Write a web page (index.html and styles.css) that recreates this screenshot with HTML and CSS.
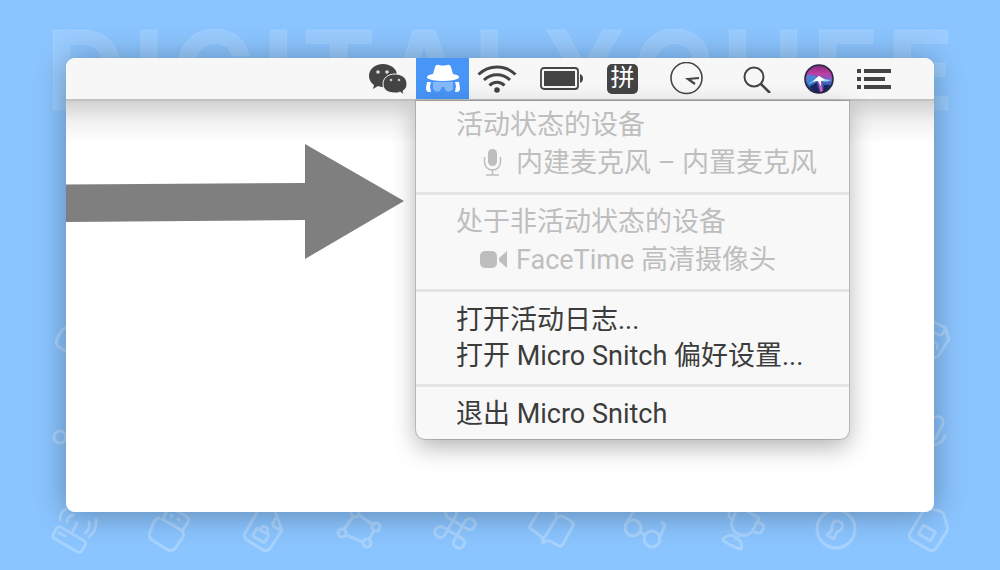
FILE: index.html
```html
<!DOCTYPE html>
<html lang="zh-CN">
<head>
    <meta charset="UTF-8">
    <meta name="viewport" content="width=device-width, initial-scale=1.0">
    <title>Micro Snitch</title>
    <link rel="stylesheet" href="styles.css">
</head>
<body>
    <div class="backdrop" aria-hidden="true">
        <div class="wordmark">
            <span>D</span><span>I</span><span>G</span><span>I</span><span>T</span><span>A</span><span>L</span><span>Y</span><span>C</span><span>H</span><span>E</span><span>E</span>
        </div>
        <div class="doodles">
            <div class="doodle-row">
                <svg viewBox="0 0 48 48"><path d="M18 9Q13 10 10 15L7 21Q5 26 9 29L20 36"/></svg>
                <svg viewBox="0 0 48 48"><path d="M28 4L38 9Q41 11 41 15L43 21L33 37Q30 41 26 39M26 13L33 17Q38 17 39 11M27 24Q33 25 31 31"/></svg>
            </div>
            <div class="doodle-row">
                <svg viewBox="0 0 48 48"><circle cx="10" cy="24" r="6"/></svg>
                <svg viewBox="0 0 48 48"><path d="M26 5Q38 1 37 11L29 26M39 23Q36 31 28 32"/></svg>
            </div>
            <div class="doodle-row">
                <svg viewBox="0 0 48 48"><rect x="-16" y="-6" width="33" height="13" rx="3" transform="translate(19 31) rotate(30)"/><path d="M9 25L15 28M27 15L23 23M39 14Q41 21 35 25M46 11Q47 23 39 29M23 7Q17 8 17 14M16 1Q10 4 10 12"/></svg>
                <svg viewBox="0 0 48 48"><path d="M14 10Q11 10 9 14L5 24Q3 29 7 32L23 42Q28 44 31 39L38 29Q40 25 36 22L17 11M19 9L22 3M30 2L41 8Q45 10 43 14L38 22M26 7L27 8M33 11L34 12"/></svg>
                <svg viewBox="0 0 48 48"><path d="M18 3L5 25Q3 29 7 32L23 42Q28 44 31 39L42 22L35 3M37 8L33 15Q32 18 36 20L42 22"/><rect x="-7" y="-4" width="14" height="9" rx="2" transform="translate(21 27) rotate(30)"/><path d="M20 22Q22 17 26 19Q29 21 27 25"/></svg>
                <svg viewBox="0 0 48 48"><circle cx="7" cy="25" r="4"/><circle cx="32" cy="35" r="4"/><circle cx="41" cy="19" r="4"/><circle cx="20" cy="5" r="4"/><path d="M9 21L18 9M11 27L28 34M34 31L39 23M24 7L37 16"/></svg>
                <svg viewBox="0 0 48 48"><g transform="translate(25 20) rotate(30) scale(1.8) translate(-12 -12)"><path class="thin" d="M18 3a3 3 0 0 0-3 3v12a3 3 0 1 0 3-3H6a3 3 0 1 0 3 3V6a3 3 0 1 0-3 3h12a3 3 0 1 0 0-6z"/></g></svg>
                <svg viewBox="0 0 48 48"><path d="M13 3L4 18Q3 20 5 21L16 29L17 35Q22 31 26 34L33 38Q35 39 37 36L47 18Q48 15 45 13L38 9Q33 7 30 11L17 32M30 11Q32 4 26 1"/></svg>
                <svg viewBox="0 0 48 48"><circle cx="12" cy="20" r="8"/><circle cx="31" cy="31" r="8"/><path d="M19 24L24 27M6 14L12 4Q14 1 20 3M38 31L43 20Q45 16 41 15"/></svg>
                <svg viewBox="0 0 48 48"><path d="M20 3L16 13Q14 22 22 26Q32 30 37 22L43 10L27 1M41 14L46 16Q49 17 47 21L45 24Q43 27 37 23M14 2Q11 9 16 11M23 27L20 31M8 30Q16 24 22 31Q27 35 25 41Q18 40 8 33Q6 32 8 30"/></svg>
                <svg viewBox="0 0 48 48"><circle cx="25" cy="21" r="19"/><path d="M21 19Q21 12 28 13Q34 16 30 22L26 24L23 31L16 27L21 22Z"/></svg>
                <svg viewBox="0 0 48 48"><path d="M18 2L4 25Q2 29 6 32L23 42Q28 44 31 39L41 23Q42 20 41 17L38 7Q37 4 34 3L26 1"/><rect x="-7" y="-5" width="14" height="10" rx="1" transform="translate(21 25) rotate(30)"/></svg>
            </div>
        </div>
    </div>

    <main class="window">
        <header class="menubar">
            <button class="status wechat" aria-label="微信">
                <svg width="38" height="32" viewBox="0 0 38 32">
                    <path fill="#444" d="M14 1C6 1 0 6 0 13c0 4 2 7 5 9l-1 4 5-3c2 1 5 1 8 1C25 24 28 18 28 12 28 6 22 1 14 1z"/>
                    <path fill="#444" stroke="#f7f7f7" stroke-width="1" d="M26 11c-7 0-12 4-12 10s5 9 12 9c2 0 3 0 5-1l4 3-1-4c3-2 4-4 4-7 0-6-5-10-12-10z"/>
                    <circle cx="9" cy="9" r="1.8" fill="#ddd"/><circle cx="18" cy="9" r="1.8" fill="#ddd"/>
                    <circle cx="22" cy="17" r="1.3" fill="#ccc"/><circle cx="30" cy="17" r="1.3" fill="#ccc"/>
                </svg>
            </button>
            <div class="snitch">
                <button class="status active" aria-label="Micro Snitch" aria-expanded="true">
                    <svg width="34" height="30" viewBox="0 0 34 30">
                        <path fill="#fff" d="M7 10L9 3Q10 0 13 1Q17 2 21 1Q24 0 25 3L27 10Q34 11 33 14Q29 17 17 17Q5 17 1 14Q0 11 7 10z"/>
                        <path fill="#86b9fb" d="M7 18h20v7q-3 4-7 2l-2-4h-2l-2 4q-4 2-7-2z"/>
                        <path fill="#fff" d="M1 18h4l-1 4 1 6H3Q0 28 0 24zM33 18h-4l1 4-1 6h2Q34 28 34 24z"/>
                    </svg>
                </button>
                <div class="menu">
                    <section>
                        <h2>活动状态的设备</h2>
                        <button class="device" disabled>
                            <svg width="28" height="28" viewBox="0 0 28 28">
                                <rect x="9" y="0" width="9" height="17" rx="4.5" fill="#bebebe"/>
                                <path d="M5.500 8v5a8 8 0 0 0 16 0V8M13.500 21v5M7 26h13" fill="none" stroke="#bebebe" stroke-width="1.5"/>
                            </svg>
                            内建麦克风 – 内置麦克风
                        </button>
                    </section>
                    <section>
                        <h2>处于非活动状态的设备</h2>
                        <button class="device" disabled>
                            <svg width="28" height="28" viewBox="0 0 28 28">
                                <rect x="1" y="5" width="17" height="17" rx="5" fill="#bebebe"/>
                                <path d="M28 5v17l-8-7v-3z" fill="#bebebe"/>
                            </svg>
                            FaceTime 高清摄像头
                        </button>
                    </section>
                    <section class="actions">
                        <button class="action">打开活动日志...</button>
                        <button class="action">打开 Micro Snitch 偏好设置...</button>
                    </section>
                    <section class="actions">
                        <button class="action">退出 Micro Snitch</button>
                    </section>
                </div>
            </div>
            <button class="status wifi" aria-label="Wi-Fi">
                <svg width="40" height="30" viewBox="0 0 40 30">
                    <g fill="none" stroke="#444" stroke-width="3">
                        <path d="M1.500 10.500a26.500 26.500 0 0 1 37 0"/>
                        <path d="M7 16a18.500 18.500 0 0 1 26 0"/>
                        <path d="M12.500 21.500a10.500 10.500 0 0 1 15 0"/>
                    </g>
                    <circle cx="20" cy="26" r="2.800" fill="#444"/>
                </svg>
            </button>
            <button class="status battery" aria-label="电池">
                <svg width="44" height="24" viewBox="0 0 44 24">
                    <rect x="1" y="1" width="37" height="21" rx="3" fill="none" stroke="#444" stroke-width="1.800"/>
                    <rect x="4" y="4" width="31" height="15" fill="#444"/>
                    <path d="M40 7q3 1 3 4.500T40 16z" fill="#444"/>
                </svg>
            </button>
            <button class="status input-source" aria-label="拼音"><span>拼</span></button>
            <button class="status clock" aria-label="时钟">
                <svg width="34" height="34" viewBox="0 0 34 34" fill="none" stroke="#444">
                    <circle cx="16.500" cy="16" r="15.500" stroke-width="1.600"/>
                    <path d="M29 16L18 17L25 22" stroke-width="2.200"/>
                </svg>
            </button>
            <button class="status search" aria-label="搜索">
                <svg width="28" height="28" viewBox="0 0 28 28" fill="none" stroke="#444">
                    <circle cx="11" cy="12" r="9.500" stroke-width="2"/>
                    <path d="M18 19L27 28" stroke-width="2.600"/>
                </svg>
            </button>
            <button class="status siri" aria-label="Siri">
                <svg width="30" height="30" viewBox="0 0 30 30">
                    <defs>
                        <linearGradient id="orb" x1="0" y1="0" x2="0" y2="1">
                            <stop offset="0" stop-color="#7a2d78"/>
                            <stop offset=".3" stop-color="#c13ca4"/>
                            <stop offset=".52" stop-color="#7a62c8"/>
                            <stop offset=".75" stop-color="#2358a8"/>
                            <stop offset="1" stop-color="#15163c"/>
                        </linearGradient>
                    </defs>
                    <circle cx="15" cy="15" r="14" fill="url(#orb)" stroke="#2b2744" stroke-width="1.600"/>
                    <path fill="#3b8fd8" opacity=".8" d="M3 11Q8 9 14 14L5 22Q2 17 3 11z"/>
                    <path fill="#18295f" d="M6 23L13 18L14 27Q9 27 6 23zM20 21L26 21Q24 26 20 27z"/>
                    <path fill="#e05bc6" d="M14 15L17 17L19 27L16 28z"/>
                    <path fill="#7fe6ee" d="M4 20Q10 17 15 12Q20 16 27 16Q21 19 16 16Q10 18 4 20z"/>
                    <path fill="#fff" d="M9 17L15 12L21 16L17 17L17 22L14 17z"/>
                </svg>
            </button>
            <button class="status list" aria-label="通知中心">
                <svg width="34" height="20" viewBox="0 0 34 20" fill="#444">
                    <path d="M0 0h4v4H0zM0 8h4v4H0zM0 16h4v4H0zM7 0h27v4H7zM7 8h21v4H7zM7 16h27v4H7z"/>
                </svg>
            </button>
        </header>
        <div class="desktop">
            <svg class="arrow" width="338" height="116" viewBox="0 0 338 116">
                <path fill="#7f7f7f" d="M0 40.500L239 39V0L338 57L239 115V76L0 78z"/>
            </svg>
        </div>
    </main>
</body>
</html>
```

FILE: styles.css
```css
* {
    box-sizing: border-box;
}
body {
    margin: 0;
    min-height: 100vh;
    padding: 58px 66px;
    background: #8bc5ff;
    font-family: Roboto, "Noto Sans CJK SC", sans-serif;
    position: relative;
    display: flex;
}
button {
    border: none;
    background: none;
    padding: 0;
    font: inherit;
    color: inherit;
}
svg {
    display: block;
    flex: none;
}

/* background lettering and doodles */
.backdrop {
    position: absolute;
    inset: 0;
    overflow: hidden;
    display: flex;
    flex-direction: column;
    justify-content: space-between;
    padding: 10px 0 14px;
}
.wordmark {
    display: flex;
    justify-content: space-between;
    padding: 0 46px;
    font-family: Inter, sans-serif;
    font-size: 110px;
    line-height: 120px;
    font-weight: 700;
    color: rgba(255, 255, 255, 0.13);
    -webkit-text-stroke: 1px rgba(255, 255, 255, 0.1);
}
.doodles {
    display: flex;
    flex-direction: column;
    gap: 47px;
    padding: 0 46px 0 50px;
}
.doodle-row {
    display: flex;
    justify-content: space-between;
}
.doodle-row svg {
    width: 48px;
    height: 48px;
    overflow: visible;
    fill: none;
    stroke: #fff;
    stroke-width: 3;
    stroke-linecap: round;
    stroke-linejoin: round;
    opacity: 0.25;
}
.doodle-row .thin {
    stroke-width: 1.7;
}

.window {
    flex: 1;
    position: relative;
    display: flex;
    flex-direction: column;
    background: #fff;
    border-radius: 9px;
    box-shadow: 0 2px 32px rgba(0, 0, 0, 0.32);
}

/* menu bar */
.menubar {
    display: flex;
    justify-content: flex-end;
    align-items: center;
    height: 43px;
    padding-right: 43px;
    background: #f7f7f7;
    border-bottom: 2px solid #c2c2c2;
    border-radius: 9px 9px 0 0;
}
.status {
    display: flex;
    align-items: center;
    justify-content: center;
}
.wechat {
    margin-right: 9px;
}
.snitch {
    position: relative;
    margin-right: 8px;
}
.active {
    width: 53px;
    height: 41px;
    background: #4795f7;
}
.wifi,
.battery {
    margin-right: 23px;
}
.input-source {
    margin-right: 32px;
}
.input-source span {
    width: 31px;
    height: 30px;
    border-radius: 5px;
    background: #444;
    color: #fff;
    font-size: 24px;
    line-height: 29px;
}
.clock {
    margin-right: 39px;
}
.search {
    margin-right: 33px;
}
.siri {
    margin-right: 23px;
}

/* drop-down */
.menu {
    position: absolute;
    top: 43px;
    left: 0;
    width: 433px;
    background: #f8f8f8;
    border-radius: 0 0 9px 9px;
    box-shadow: 0 0 0 1px rgba(0, 0, 0, 0.16), 0 8px 24px rgba(0, 0, 0, 0.3);
    color: #3c3c3c;
    font-size: 27px;
    z-index: 1;
}
.menu section {
    padding: 9px 0 11px;
}
.menu section + section {
    border-top: 3px solid #e4e4e4;
}
.menu section:first-child {
    padding-top: 6px;
}
.menu .actions {
    padding: 10px 0;
}
.menu .actions:last-child {
    padding: 9px 0 7px;
}
.menu h2 {
    margin: 0;
    padding-left: 40px;
    font-size: 27px;
    font-weight: 400;
    line-height: 37px;
    color: #bebebe;
}
.device,
.action {
    display: flex;
    align-items: center;
    width: 100%;
    line-height: 36px;
    white-space: nowrap;
}
.device {
    height: 37px;
    gap: 9px;
    padding-left: 63px;
    color: #bebebe;
}
.action {
    height: 36px;
    padding-left: 40px;
}

.desktop {
    flex: 1;
    padding: 43px 0;
    border-radius: 0 0 9px 9px;
    background: linear-gradient(#d2d2d2, #f0f0f0 20px, #fff 42px);
}
```
